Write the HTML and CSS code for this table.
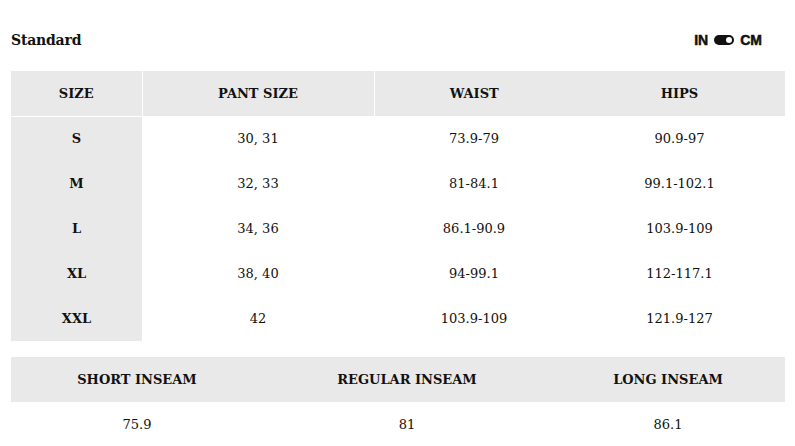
FILE: index.html
```html
<!DOCTYPE html>
<html>
<head>
<meta charset="utf-8">
<link rel="stylesheet" href="styles.css">
</head>
<body>
<div class="page">
  <div class="topbar">
    <div class="title">Standard</div>
    <div class="unit">
      <span>IN</span>
      <span class="switch"><span class="knob"></span></span>
      <span>CM</span>
    </div>
  </div>
  <table class="chart sizes">
    <colgroup>
      <col class="c1"><col class="c2"><col class="c3"><col class="c4">
    </colgroup>
    <thead>
      <tr><th class="sep">SIZE</th><th class="sep">PANT SIZE</th><th>WAIST</th><th>HIPS</th></tr>
    </thead>
    <tbody>
      <tr><th class="rowhead">S</th><td>30, 31</td><td>73.9-79</td><td>90.9-97</td></tr>
      <tr><th class="rowhead">M</th><td>32, 33</td><td>81-84.1</td><td>99.1-102.1</td></tr>
      <tr><th class="rowhead">L</th><td>34, 36</td><td>86.1-90.9</td><td>103.9-109</td></tr>
      <tr><th class="rowhead">XL</th><td>38, 40</td><td>94-99.1</td><td>112-117.1</td></tr>
      <tr><th class="rowhead">XXL</th><td>42</td><td>103.9-109</td><td>121.9-127</td></tr>
    </tbody>
  </table>
  <table class="chart inseam">
    <colgroup>
      <col class="i1"><col class="i2"><col class="i3">
    </colgroup>
    <thead>
      <tr><th>SHORT INSEAM</th><th>REGULAR INSEAM</th><th>LONG INSEAM</th></tr>
    </thead>
    <tbody>
      <tr><td>75.9</td><td>81</td><td>86.1</td></tr>
    </tbody>
  </table>
</div>
</body>
</html>
```
FILE: styles.css
```css
html, body {
  margin: 0;
  padding: 0;
  background: #fff;
}
body {
  font-family: "DejaVu Serif", serif;
  color: #111;
}
.page {
  padding: 0 10px 0 11px;
}
.topbar {
  height: 71px;
  display: flex;
  align-items: center;
  justify-content: space-between;
  padding-top: 8px;
  box-sizing: border-box;
  padding-right: 23px;
}
.title {
  font-weight: bold;
  font-size: 14px;
  letter-spacing: -0.2px;
}
.unit {
  display: flex;
  align-items: center;
  gap: 6px;
  font-family: "Liberation Sans", Arial, sans-serif;
  font-weight: bold;
  font-size: 14px;
  color: #111;
  -webkit-text-stroke: 0.5px #111;
}
.switch {
  display: inline-block;
  width: 20px;
  height: 10px;
  border-radius: 5px;
  background: #111;
  position: relative;
}
.knob {
  position: absolute;
  right: 2px;
  top: 2px;
  width: 6px;
  height: 6px;
  border-radius: 50%;
  background: #fff;
}
.chart {
  width: 774px;
  border-collapse: collapse;
  table-layout: fixed;
}
.chart th, .chart td {
  height: 45px;
  padding: 0;
  text-align: center;
  vertical-align: middle;
  font-size: 13px;
}
.chart th {
  font-weight: bold;
}
.chart td {
  font-weight: normal;
}
.chart thead th {
  background: #e9e9e9;
}
.chart thead th.sep {
  border-right: 1px solid #fff;
}
.sizes thead tr {
  border-bottom: 1px solid #fff;
}
.rowhead {
  background: #e9e9e9;
}
.c1 { width: 131px; }
.c2 { width: 232px; }
.c3 { width: 200px; }
.c4 { width: 211px; }
.sizes tbody tr:first-child th,
.sizes tbody tr:first-child td {
  height: 44px;
  padding-bottom: 1px;
  box-sizing: border-box;
}
.inseam {
  margin-top: 16px;
}
.i1 { width: 252px; }
.i2 { width: 288px; }
.i3 { width: 234px; }
```
